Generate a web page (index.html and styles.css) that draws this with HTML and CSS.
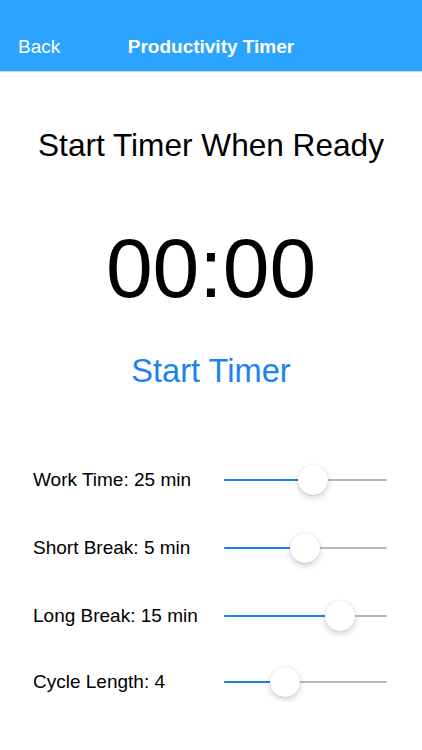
FILE: index.html
```html
<!DOCTYPE html>
<html>
<head>
<meta charset="utf-8">
<link rel="stylesheet" href="styles.css">
</head>
<body>
<header class="navbar">
  <span class="nav-back">Back</span>
  <span class="nav-title">Productivity Timer</span>
  <span class="nav-spacer"></span>
</header>
<main class="content">
  <h1 class="headline">Start Timer When Ready</h1>
  <div class="clock">00:00</div>
  <div class="start-btn">Start Timer</div>
  <section class="settings">
    <div class="row">
      <span class="label">Work Time: 25 min</span>
      <div class="slider" style="--p:0.556"><div class="fill"></div><div class="thumb"></div></div>
    </div>
    <div class="row">
      <span class="label">Short Break: 5 min</span>
      <div class="slider" style="--p:0.496"><div class="fill"></div><div class="thumb"></div></div>
    </div>
    <div class="row">
      <span class="label">Long Break: 15 min</span>
      <div class="slider" style="--p:0.76"><div class="fill"></div><div class="thumb"></div></div>
    </div>
    <div class="row row-last">
      <span class="label">Cycle Length: 4</span>
      <div class="slider" style="--p:0.346"><div class="fill"></div><div class="thumb"></div></div>
    </div>
  </section>
</main>
</body>
</html>
```
FILE: styles.css
```css
* { box-sizing: border-box; }
html, body {
  margin: 0;
  padding: 0;
  background: #ffffff;
  font-family: "Liberation Sans", Arial, sans-serif;
  color: #000;
}
.navbar {
  height: 72px;
  background: #2aa4ff;
  border-bottom: 1px solid #cdd6de;
  display: grid;
  grid-template-columns: 1fr auto 1fr;
  align-items: end;
  padding: 0 18px 13px 18px;
  color: #fff;
  font-size: 19px;
  line-height: 22px;
}
.nav-back { justify-self: start; }
.nav-title { font-weight: bold; }
.content {
  display: flex;
  flex-direction: column;
  align-items: center;
  padding-top: 55px;
}
.headline {
  margin: 0;
  font-weight: normal;
  font-size: 31.6px;
  line-height: 36px;
}
.clock {
  margin-top: 60px;
  font-size: 84px;
  line-height: 90px;
}
.start-btn {
  margin-top: 38px;
  font-size: 32.6px;
  line-height: 40px;
  color: #1a82f2;
}
.settings {
  align-self: stretch;
  margin-top: 69px;
  display: flex;
  flex-direction: column;
  gap: 28px;
  padding: 0 35px 0 33px;
}
.row {
  height: 40px;
  display: flex;
  align-items: center;
}
.row-last { margin-top: -2px; }
.label {
  width: 191px;
  font-size: 19px;
}
.slider {
  position: relative;
  flex: 1;
  height: 2px;
  background: #b7b7b7;
  border-radius: 1px;
}
.fill {
  height: 100%;
  width: calc(15px + var(--p) * (100% - 30px));
  background: #1a7ff0;
  border-radius: 1px;
}
.thumb {
  position: absolute;
  top: -14px;
  left: calc(var(--p) * (100% - 30px));
  width: 30px;
  height: 30px;
  border-radius: 50%;
  background: #fff;
  box-shadow: 0 3px 6px rgba(0,0,0,0.18), 0 0 0 0.5px rgba(0,0,0,0.08);
}
```
